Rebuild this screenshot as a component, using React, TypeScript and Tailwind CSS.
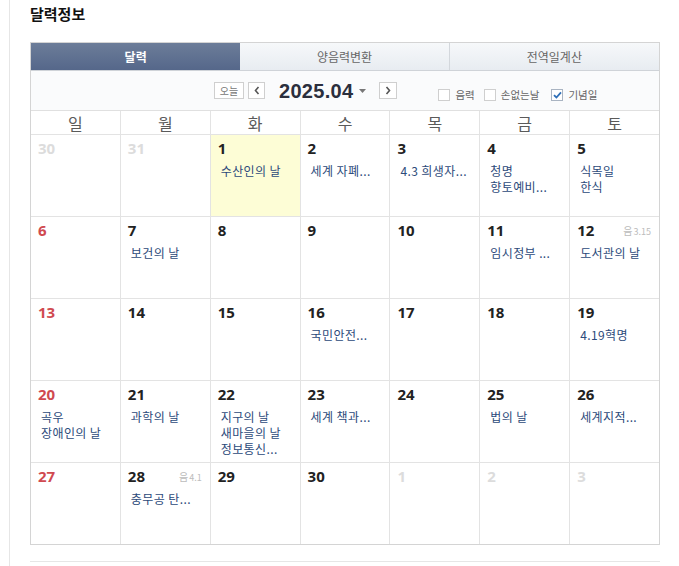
import React from "react";

type Cell = {
  d: number;
  kind: "other" | "sun" | "normal";
  today?: boolean;
  lunar?: string;
  events?: string[];
};

const weeks: Cell[][] = [
  [
    { d: 30, kind: "other" },
    { d: 31, kind: "other" },
    { d: 1, kind: "normal", today: true, events: ["수산인의 날"] },
    { d: 2, kind: "normal", events: ["세계 자폐..."] },
    { d: 3, kind: "normal", events: ["4.3 희생자..."] },
    { d: 4, kind: "normal", events: ["청명", "향토예비..."] },
    { d: 5, kind: "normal", events: ["식목일", "한식"] },
  ],
  [
    { d: 6, kind: "sun" },
    { d: 7, kind: "normal", events: ["보건의 날"] },
    { d: 8, kind: "normal" },
    { d: 9, kind: "normal" },
    { d: 10, kind: "normal" },
    { d: 11, kind: "normal", events: ["임시정부 ..."] },
    { d: 12, kind: "normal", lunar: "3.15", events: ["도서관의 날"] },
  ],
  [
    { d: 13, kind: "sun" },
    { d: 14, kind: "normal" },
    { d: 15, kind: "normal" },
    { d: 16, kind: "normal", events: ["국민안전..."] },
    { d: 17, kind: "normal" },
    { d: 18, kind: "normal" },
    { d: 19, kind: "normal", events: ["4.19혁명"] },
  ],
  [
    { d: 20, kind: "sun", events: ["곡우", "장애인의 날"] },
    { d: 21, kind: "normal", events: ["과학의 날"] },
    { d: 22, kind: "normal", events: ["지구의 날", "새마을의 날", "정보통신..."] },
    { d: 23, kind: "normal", events: ["세계 책과..."] },
    { d: 24, kind: "normal" },
    { d: 25, kind: "normal", events: ["법의 날"] },
    { d: 26, kind: "normal", events: ["세계지적..."] },
  ],
  [
    { d: 27, kind: "sun" },
    { d: 28, kind: "normal", lunar: "4.1", events: ["충무공 탄..."] },
    { d: 29, kind: "normal" },
    { d: 30, kind: "normal" },
    { d: 1, kind: "other" },
    { d: 2, kind: "other" },
    { d: 3, kind: "other" },
  ],
];

const days = ["일", "월", "화", "수", "목", "금", "토"];

const kr = { fontFamily: '"Noto Sans CJK KR", "Noto Sans", sans-serif' };
const num = { fontFamily: '"Open Sans", "Noto Sans CJK KR", sans-serif' };

function Check({ checked }: { checked?: boolean }) {
  return (
    <span
      className={
        "flex h-[12px] w-[12px] items-center justify-center border bg-white " +
        (checked ? "border-[#a9b4c2]" : "border-[#cfcfcf]")
      }
    >
      {checked && (
        <svg width="9" height="8" viewBox="0 0 9 8">
          <path d="M1 4.2 L3.4 6.5 L8 1.3" fill="none" stroke="#2f6fb8" strokeWidth="1.8" />
        </svg>
      )}
    </span>
  );
}

export default function App() {
  return (
    <div className="min-h-[566px] w-[679px] bg-white" style={kr}>
      <div className="ml-[9px] min-h-[566px] border-l border-[#e6e6e6] pl-[20px]">
        <div className="pt-[3px] text-[15px] font-bold leading-[22px] text-[#111]">달력정보</div>
        <div className="mt-[17px] w-[630px] border border-[#d4d4d4]">
          {/* tabs */}
          <div className="grid h-[28px] grid-cols-3 border-b border-[#cfd3d8]">
            <div className="flex items-center justify-center bg-gradient-to-b from-[#6c7d99] to-[#55678a] text-[12px] font-bold text-white">
              달력
            </div>
            <div className="flex items-center justify-center border-r border-[#d3d7dc] bg-gradient-to-b from-[#f6f8fa] to-[#e8ecf1] text-[12px] text-[#666]">
              양음력변환
            </div>
            <div className="flex items-center justify-center bg-gradient-to-b from-[#f6f8fa] to-[#e8ecf1] text-[12px] text-[#666]">
              전역일계산
            </div>
          </div>
          {/* toolbar */}
          <div className="flex h-[40px] items-center border-b border-[#e0e0e0] bg-[#fafbfc] pl-[183px]">
            <span className="flex h-[17px] w-[30px] items-center justify-center border border-[#cfcfcf] bg-white text-[10px] leading-none text-[#777]">
              오늘
            </span>
            <span className="ml-[4px] flex h-[17px] w-[17px] items-center justify-center border border-[#cfcfcf] bg-white">
              <svg width="6" height="9" viewBox="0 0 6 9">
                <path d="M4.5 1 L1.5 4.5 L4.5 8" fill="none" stroke="#555" strokeWidth="1.6" />
              </svg>
            </span>
            <span
              className="ml-[14px] text-[20px] font-bold leading-none tracking-[0.3px] text-[#2b2f3d]"
              style={{ fontFamily: '"Liberation Sans", Arial, sans-serif' }}
            >
              2025.04
            </span>
            <svg className="ml-[6px]" width="7" height="4" viewBox="0 0 7 4">
              <path d="M0 0 L7 0 L3.5 4 Z" fill="#777" />
            </svg>
            <span className="ml-[13px] flex h-[17px] w-[18px] items-center justify-center border border-[#cfcfcf] bg-white">
              <svg width="6" height="9" viewBox="0 0 6 9">
                <path d="M1.5 1 L4.5 4.5 L1.5 8" fill="none" stroke="#555" strokeWidth="1.6" />
              </svg>
            </span>
            <div className="ml-[41px] flex items-center pt-[8px] text-[10.5px] text-[#666]">
              <Check />
              <span className="ml-[5px]">음력</span>
              <span className="ml-[9px]">
                <Check />
              </span>
              <span className="ml-[5px]">손없는날</span>
              <span className="ml-[12px]">
                <Check checked />
              </span>
              <span className="ml-[5px]">기념일</span>
            </div>
          </div>
          {/* weekday header */}
          <div className="grid grid-cols-7 gap-px bg-[#e3e3e3]">
            {days.map((d) => (
              <div
                key={d}
                className="flex h-[23px] items-center justify-center bg-white text-[16px] leading-none text-[#5a5a5a]"
              >
                {d}
              </div>
            ))}
          </div>
          <div className="grid grid-cols-7 gap-px border-t border-[#e3e3e3] bg-[#e3e3e3]">
            {weeks.flat().map((c, i) => (
              <div
                key={i}
                className={"h-[81px] pl-[7px] pt-[3px] " + (c.today ? "bg-[#fdfdd6]" : "bg-white")}
              >
                <div className="flex items-start justify-between pr-[8px]">
                  <span
                    className={
                      "text-[15px] font-bold leading-[20px] " +
                      (c.kind === "other"
                        ? "text-[#dcdcdc]"
                        : c.kind === "sun"
                        ? "text-[#d04a50]"
                        : "text-[#222]")
                    }
                    style={num}
                  >
                    {c.d}
                  </span>
                  {c.lunar && (
                    <span className="pt-[3px] text-[10px] leading-[16px] text-[#bcbcbc]">
                      음<span className="ml-[1px] text-[9px]">{c.lunar}</span>
                    </span>
                  )}
                </div>
                {c.events && (
                  <div className="mt-[5px] pl-[3px] text-[12px] leading-[16px] tracking-[0.4px] text-[#2c4a7a]">
                    {c.events.map((e) => (
                      <div key={e} className="whitespace-nowrap">
                        {e}
                      </div>
                    ))}
                  </div>
                )}
              </div>
            ))}
          </div>
        </div>
        <div className="mt-[16px] h-px w-[630px] bg-[#e6e6e6]" />
      </div>
    </div>
  );
}
